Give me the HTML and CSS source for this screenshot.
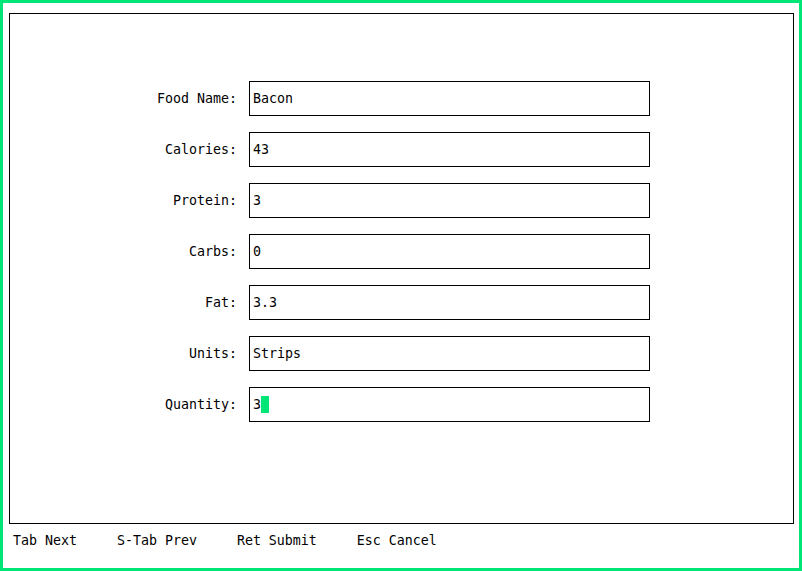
FILE: index.html
```html
<!DOCTYPE html>
<html>
<head>
<meta charset="utf-8">
<link rel="stylesheet" href="styles.css">
</head>
<body>
<div class="screen">
  <div class="frame">
    <div class="form">
      <label class="label">Food Name:</label><div class="field">Bacon</div>
      <label class="label">Calories:</label><div class="field">43</div>
      <label class="label">Protein:</label><div class="field">3</div>
      <label class="label">Carbs:</label><div class="field">0</div>
      <label class="label">Fat:</label><div class="field">3.3</div>
      <label class="label">Units:</label><div class="field">Strips</div>
      <label class="label">Quantity:</label><div class="field">3<span class="cursor"></span></div>
    </div>
  </div>
  <div class="status">Tab Next     S-Tab Prev     Ret Submit     Esc Cancel</div>
</div>
</body>
</html>
```
FILE: styles.css
```css
* { box-sizing: border-box; }
html, body { margin: 0; padding: 0; background: #fff; }
body {
  font-family: "DejaVu Sans Mono", monospace;
  font-size: 13.29px;
  line-height: 17px;
  color: #000;
}
.screen {
  width: 802px;
  height: 571px;
  border: 3px solid #00e676;
  padding: 2px;
  overflow: hidden;
}
.frame {
  margin: 8px 0 0 4px;
  width: 785px;
  height: 511px;
  border: 1px solid #000;
  padding-top: 67px;
}
.form {
  display: grid;
  grid-template-columns: 227px 401px;
  grid-auto-rows: 35px;
  column-gap: 12px;
  row-gap: 16px;
}
.label {
  text-align: right;
  align-self: center;
  white-space: pre;
}
.field {
  border: 1px solid #000;
  padding: 8px 0 0 3px;
  white-space: pre;
  display: flex;
  align-items: flex-start;
}
.cursor {
  display: inline-block;
  width: 8px;
  height: 17px;
  background: #00e676;
}
.status {
  margin-top: 8px;
  padding-left: 8px;
  white-space: pre;
}
```
